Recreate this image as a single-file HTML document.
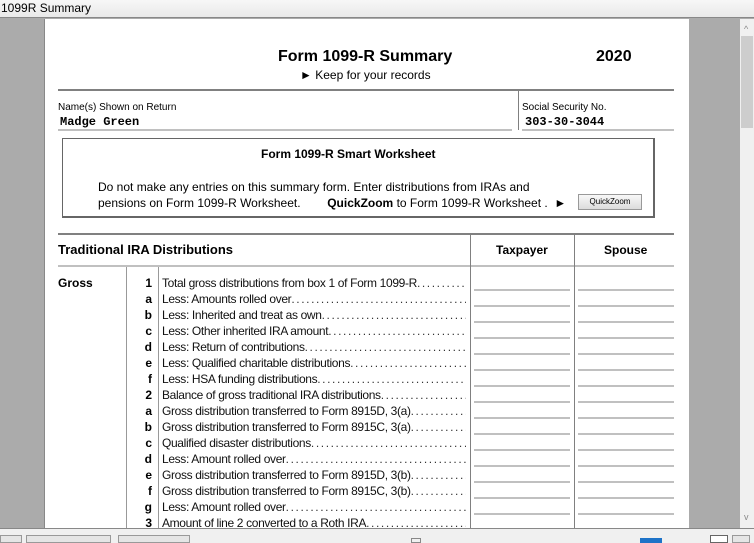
<!DOCTYPE html>
<html><head><style>
*{margin:0;padding:0;box-sizing:border-box}
body{width:754px;height:543px;overflow:hidden;background:#ababab;font-family:"Liberation Sans",sans-serif;position:relative;color:#000}
.a{position:absolute}
.title{left:0;top:0;width:754px;height:18px;background:linear-gradient(#f7f7f7,#e9e9e9);border-bottom:1px solid #888;font-size:12px;line-height:16px;padding-left:1px}
.page{left:44px;top:19px;width:645px;height:509px;background:#fff;border-left:1px solid #888}
.sb{left:740px;top:19px;width:14px;height:509px;background:#f0f0f0}
.thumb{left:741px;top:36px;width:12px;height:92px;background:#cdcdcd}
.bot{left:0;top:528px;width:754px;height:15px;background:#f0f0f0;border-top:1px solid #888}
.hl{height:2px;background:#808080}
.gl{height:2px;background:#c0c0c0}
.vl{width:1px;background:#808080}
.mono{font-family:"Liberation Mono",monospace;font-weight:bold;font-size:12px}
.num{position:absolute;left:130px;width:22px;text-align:right;font-weight:bold;font-size:12px}
.desc{position:absolute;left:162px;width:304px;overflow:hidden;white-space:nowrap;font-size:12px;letter-spacing:-0.35px;color:#111}
.desc i{font-style:normal;letter-spacing:1.6px;color:#333}
.u1{position:absolute;left:474px;width:96px;height:2px;background:#c0c0c0}
.u2{position:absolute;left:578px;width:96px;height:2px;background:#c0c0c0}
</style></head><body>
<div class="a title">1099R Summary</div>
<div class="a page"></div>
<div class="a sb"></div><div class="a thumb"></div>
<div class="a" style="left:744px;top:24px;font-size:9px;color:#888">^</div>
<div class="a" style="left:744px;top:512px;font-size:9px;color:#888">v</div>

<div class="a" style="left:278px;top:48px;font-size:16px;font-weight:bold">Form 1099-R Summary</div>
<div class="a" style="left:596px;top:48px;font-size:16px;font-weight:bold">2020</div>
<div class="a" style="left:300px;top:68px;font-size:12px">&#9658; Keep for your records</div>
<div class="a hl" style="left:58px;top:89px;width:616px"></div>
<div class="a vl" style="left:518px;top:90px;height:40px"></div>
<div class="a" style="left:58px;top:102px;font-size:10px">Name(s) Shown on Return</div>
<div class="a mono" style="left:60px;top:115px">Madge Green</div>
<div class="a gl" style="left:58px;top:129px;width:454px"></div>
<div class="a" style="left:522px;top:102px;font-size:10px">Social Security No.</div>
<div class="a mono" style="left:525px;top:115px">303-30-3044</div>
<div class="a gl" style="left:522px;top:129px;width:152px"></div>

<div class="a" style="left:62px;top:138px;width:593px;height:80px;border:1px solid #666;border-right-width:2px;border-bottom-width:2px"></div>
<div class="a" style="left:261px;top:147px;font-size:12px;font-weight:bold">Form 1099-R Smart Worksheet</div>
<div class="a" style="left:98px;top:180px;font-size:12px">Do not make any entries on this summary form. Enter distributions from IRAs and</div>
<div class="a" style="left:98px;top:196px;font-size:12px;white-space:nowrap">pensions on Form 1099-R Worksheet.&nbsp;&nbsp;&nbsp;&nbsp;&nbsp;&nbsp;&nbsp; <b>QuickZoom</b> to Form 1099-R Worksheet . &nbsp;&#9658;</div>
<div class="a" style="left:578px;top:194px;width:64px;height:16px;border:1px solid #999;background:linear-gradient(#f8f8f8,#dcdcdc);font-size:8px;text-align:center;line-height:14px">QuickZoom</div>

<div class="a hl" style="left:58px;top:233px;width:616px"></div>
<div class="a gl" style="left:58px;top:265px;width:616px"></div>
<div class="a vl" style="left:470px;top:235px;height:293px"></div>
<div class="a vl" style="left:574px;top:235px;height:293px"></div>
<div class="a vl" style="left:126px;top:267px;height:261px;background:#999"></div>
<div class="a vl" style="left:158px;top:267px;height:261px;background:#999"></div>
<div class="a" style="left:58px;top:242px;font-size:13px;font-weight:bold">Traditional IRA Distributions</div>
<div class="a" style="left:496px;top:243px;font-size:12px;font-weight:bold">Taxpayer</div>
<div class="a" style="left:604px;top:243px;font-size:12px;font-weight:bold">Spouse</div>
<div class="a" style="left:58px;top:276px;font-size:12px;font-weight:bold">Gross</div>

<div class="a" style="left:0;top:1px">
<div class="num" style="top:275px">1</div><div class="desc" style="top:275px">Total gross distributions from box 1 of Form 1099-R<i>..............................</i></div>
<div class="num" style="top:291px">a</div><div class="desc" style="top:291px">Less: Amounts rolled over<i>.............................................................</i></div>
<div class="num" style="top:307px">b</div><div class="desc" style="top:307px">Less: Inherited and treat as own<i>.............................................................</i></div>
<div class="num" style="top:323px">c</div><div class="desc" style="top:323px">Less: Other inherited IRA amount<i>.............................................................</i></div>
<div class="num" style="top:339px">d</div><div class="desc" style="top:339px">Less: Return of contributions<i>.............................................................</i></div>
<div class="num" style="top:355px">e</div><div class="desc" style="top:355px">Less: Qualified charitable distributions<i>.............................................................</i></div>
<div class="num" style="top:371px">f</div><div class="desc" style="top:371px">Less: HSA funding distributions<i>.............................................................</i></div>
<div class="num" style="top:387px">2</div><div class="desc" style="top:387px">Balance of gross traditional IRA distributions<i>.............................................................</i></div>
<div class="num" style="top:403px">a</div><div class="desc" style="top:403px">Gross distribution transferred to Form 8915D, 3(a)<i>..............................</i></div>
<div class="num" style="top:419px">b</div><div class="desc" style="top:419px">Gross distribution transferred to Form 8915C, 3(a)<i>..............................</i></div>
<div class="num" style="top:435px">c</div><div class="desc" style="top:435px">Qualified disaster distributions<i>.............................................................</i></div>
<div class="num" style="top:451px">d</div><div class="desc" style="top:451px">Less: Amount rolled over<i>.............................................................</i></div>
<div class="num" style="top:467px">e</div><div class="desc" style="top:467px">Gross distribution transferred to Form 8915D, 3(b)<i>..............................</i></div>
<div class="num" style="top:483px">f</div><div class="desc" style="top:483px">Gross distribution transferred to Form 8915C, 3(b)<i>..............................</i></div>
<div class="num" style="top:499px">g</div><div class="desc" style="top:499px">Less: Amount rolled over<i>.............................................................</i></div>
<div class="num" style="top:515px">3</div><div class="desc" style="top:515px">Amount of line 2 converted to a Roth IRA<i>.............................................................</i></div>
</div>
<div class="a" style="left:0;top:0">
<div class="u1" style="top:289px"></div><div class="u2" style="top:289px"></div>
<div class="u1" style="top:305px"></div><div class="u2" style="top:305px"></div>
<div class="u1" style="top:321px"></div><div class="u2" style="top:321px"></div>
<div class="u1" style="top:337px"></div><div class="u2" style="top:337px"></div>
<div class="u1" style="top:353px"></div><div class="u2" style="top:353px"></div>
<div class="u1" style="top:369px"></div><div class="u2" style="top:369px"></div>
<div class="u1" style="top:385px"></div><div class="u2" style="top:385px"></div>
<div class="u1" style="top:401px"></div><div class="u2" style="top:401px"></div>
<div class="u1" style="top:417px"></div><div class="u2" style="top:417px"></div>
<div class="u1" style="top:433px"></div><div class="u2" style="top:433px"></div>
<div class="u1" style="top:449px"></div><div class="u2" style="top:449px"></div>
<div class="u1" style="top:465px"></div><div class="u2" style="top:465px"></div>
<div class="u1" style="top:481px"></div><div class="u2" style="top:481px"></div>
<div class="u1" style="top:497px"></div><div class="u2" style="top:497px"></div>
<div class="u1" style="top:513px"></div><div class="u2" style="top:513px"></div>
</div>

<div class="a bot"></div>
<div class="a" style="left:0;top:535px;width:22px;height:8px;border:1px solid #999;background:#e5e5e5"></div>
<div class="a" style="left:26px;top:535px;width:85px;height:8px;border:1px solid #999;background:#e5e5e5"></div>
<div class="a" style="left:118px;top:535px;width:72px;height:8px;border:1px solid #999;background:#e5e5e5"></div>
<div class="a" style="left:411px;top:538px;width:10px;height:5px;border:1px solid #888"></div>
<div class="a" style="left:640px;top:538px;width:22px;height:5px;background:#1e73c8"></div>
<div class="a" style="left:710px;top:535px;width:18px;height:8px;border:1px solid #666;background:#fff"></div>
<div class="a" style="left:732px;top:535px;width:18px;height:8px;border:1px solid #999;background:#e5e5e5"></div>
</body></html>
